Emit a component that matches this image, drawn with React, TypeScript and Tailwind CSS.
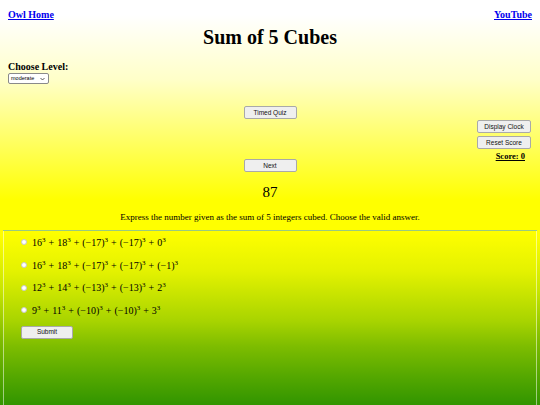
import React from "react";

const Btn = ({ label, w = "w-[53px]" }: { label: string; w?: string }) => (
  <div
    className={`${w} h-[13px] flex items-center justify-center bg-[#efefef] border border-[#a9a9a9] rounded-[2px] text-[6.5px] text-[#111]`}
    style={{ fontFamily: '"Liberation Sans", Arial, sans-serif' }}
  >
    {label}
  </div>
);

const Sup = () => <sup className="text-[7px] top-[-4px]">3</sup>;

const P = ({ b, neg }: { b: string; neg?: boolean }) =>
  neg ? (
    <span>
      (−{b})
      <Sup />
    </span>
  ) : (
    <span>
      {b}
      <Sup />
    </span>
  );

const Plus = () => <span className="mx-[3px]">+</span>;

const rows: { b: string; neg?: boolean }[][] = [
  [{ b: "16" }, { b: "18" }, { b: "17", neg: true }, { b: "17", neg: true }, { b: "0" }],
  [{ b: "16" }, { b: "18" }, { b: "17", neg: true }, { b: "17", neg: true }, { b: "1", neg: true }],
  [{ b: "12" }, { b: "14" }, { b: "13", neg: true }, { b: "13", neg: true }, { b: "2" }],
  [{ b: "9" }, { b: "11" }, { b: "10", neg: true }, { b: "10", neg: true }, { b: "3" }],
];

export default function App() {
  return (
    <div
      className="w-[540px] h-[405px] overflow-hidden flex flex-col text-black bg-[linear-gradient(to_bottom,#ffffff_0px,#ffffff_15px,#ffffc8_80px,#ffff00_200px,#ffff00_235px,#c8e600_290px,#7fbc00_340px,#339600_405px)]"
      style={{ fontFamily: '"Liberation Serif", "Times New Roman", serif' }}
    >
      <div className="flex justify-between px-[8px] pt-[9px] text-[10px] font-bold leading-[12px]">
        <a className="text-[#0000ee] underline">Owl Home</a>
        <a className="text-[#0000ee] underline">YouTube</a>
      </div>
      <h1 className="text-center text-[20px] font-bold leading-[24px] mt-[4px]">Sum of 5 Cubes</h1>
      <div className="px-[8px] mt-[12px] text-[10px] font-bold leading-[12px]">Choose Level:</div>
      <div className="px-[8px] mt-[0px]">
        <div
          className="w-[41px] h-[11px] bg-white border border-[#8a8a8a] rounded-[2px] flex items-center justify-between pl-[2px] pr-[3px] text-[5.5px]"
          style={{ fontFamily: '"Liberation Sans", Arial, sans-serif' }}
        >
          <span>moderate</span>
          <svg width="5" height="4" viewBox="0 0 10 8">
            <path d="M1 2 L5 6 L9 2" stroke="#333" strokeWidth="1.6" fill="none" />
          </svg>
        </div>
      </div>
      <div className="grid grid-cols-[1fr_53px_1fr] mt-[22px]">
        <div />
        <div className="flex flex-col">
          <Btn label="Timed Quiz" />
          <div className="h-[40px]" />
          <Btn label="Next" />
        </div>
        <div className="flex flex-col items-end pr-[9px] pt-[14px]">
          <Btn label="Display Clock" w="w-[54px]" />
          <div className="h-[3px]" />
          <Btn label="Reset Score" w="w-[54px]" />
          <div className="text-[8.5px] font-bold underline leading-[10px] mt-[2px] mr-[6px]">Score: 0</div>
        </div>
      </div>
      <div className="text-center text-[15px] leading-[16px] mt-[12px]">87</div>
      <div className="text-center text-[9px] leading-[12px] mt-[11px]">
        Express the number given as the sum of 5 integers cubed. Choose the valid answer.
      </div>
      <div className="flex-1 mx-[3px] mt-[7px] border border-[#ffffff80] border-b-0 bg-[linear-gradient(to_bottom,#ffff00_0px,#e4f200_40px,#a8d400_90px,#7ebd00_115px,#55a800_145px,#309400_175px)] pl-[17px] pt-0">
        {rows.map((r, i) => (
          <div key={i} className="flex items-center h-[22.7px] text-[10px]">
            <span className="w-[6px] h-[6px] rounded-full bg-white border border-[#c8c8c8] mr-[5px]" />
            <span className="whitespace-nowrap">
              {r.map((t, j) => (
                <React.Fragment key={j}>
                  {j > 0 && <Plus />}
                  <P b={t.b} neg={t.neg} />
                </React.Fragment>
              ))}
            </span>
          </div>
        ))}
        <div className="mt-[4px]">
          <Btn label="Submit" w="w-[52px]" />
        </div>
      </div>
    </div>
  );
}
